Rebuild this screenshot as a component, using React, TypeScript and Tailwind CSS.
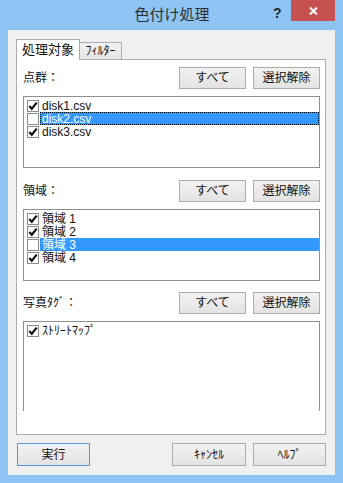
import type { ReactNode } from "react";

type Item = { label: string; checked: boolean; selected?: boolean; focus?: boolean };

const points: Item[] = [
  { label: "disk1.csv", checked: true },
  { label: "disk2.csv", checked: false, selected: true, focus: true },
  { label: "disk3.csv", checked: true },
];

const regions: Item[] = [
  { label: "領域 1", checked: true },
  { label: "領域 2", checked: true },
  { label: "領域 3", checked: false, selected: true },
  { label: "領域 4", checked: true },
];

const tags: Item[] = [{ label: "ｽﾄﾘｰﾄﾏｯﾌﾟ", checked: true }];

function Btn({ children, width, primary }: { children: ReactNode; width: string; primary?: boolean }) {
  return (
    <button
      className={
        "h-[22px] flex items-center justify-center text-[12px] text-[#111] bg-gradient-to-b from-[#f2f2f2] to-[#e3e3e3] border " +
        (primary ? "border-[#4d9ae4] " : "border-[#acacac] ") +
        width
      }
    >
      {children}
    </button>
  );
}

function Check({ on }: { on: boolean }) {
  return (
    <span className="w-[12px] h-[12px] border border-[#8a8a8a] bg-white flex items-center justify-center shrink-0">
      {on && (
        <svg width="10" height="10" viewBox="0 0 10 10">
          <path d="M1.3 5 L3.8 7.7 L8.7 1.6" stroke="#111" strokeWidth="2.2" fill="none" />
        </svg>
      )}
    </span>
  );
}

function CheckList({ items, height, noBottom }: { items: Item[]; height: string; noBottom?: boolean }) {
  return (
    <div
      className={
        "w-[297px] bg-white border border-[#8f8f8f] pt-[2px] flex flex-col " +
        (noBottom ? "border-b-0 " : "") +
        height
      }
    >
      {items.map((it) => (
        <div key={it.label} className="h-[13px] flex items-center pl-[3px]">
          <Check on={it.checked} />
          <span
            className={
              "ml-[1px] flex-1 h-[13px] flex items-center pl-[2px] text-[12px] leading-none " +
              (it.selected ? "bg-[#3399ff] text-white " : "text-[#111] ") +
              (it.focus ? "outline-1 outline-dotted outline-black -outline-offset-1" : "")
            }
          >
            {it.label}
          </span>
        </div>
      ))}
    </div>
  );
}

function Section({ label, items, mt, noBottom, listH }: { label: string; items: Item[]; mt: string; noBottom?: boolean; listH: string }) {
  return (
    <div className={"flex flex-col " + mt}>
      <div className="w-[297px] h-[22px] flex items-center">
        <span className="flex-1 text-[12px] text-[#111]">{label}</span>
        <Btn width="w-[67px]">すべて</Btn>
        <div className="w-[7px]" />
        <Btn width="w-[67px]">選択解除</Btn>
      </div>
      <div className="mt-[7px]">
        <CheckList items={items} height={listH} noBottom={noBottom} />
      </div>
    </div>
  );
}

export default function App() {
  return (
    <div className="w-[343px] h-[483px] bg-[#8dc4f4] flex flex-col font-['Liberation_Sans','Noto_Sans_CJK_JP',sans-serif] select-none">
      {/* タイトルバー */}
      <div className="relative h-[30px] shrink-0 flex items-center justify-center">
        <span className="text-[15px] text-[#2e2e2e] pt-[1px] pl-[1px]">色付け処理</span>
        <span className="absolute left-[273px] top-[3px] text-[14px] font-bold text-[#1f2a36]">?</span>
        <div className="absolute left-[291px] top-0 w-[44px] h-[21px] bg-[#c75050] flex items-center justify-center">
          <svg width="9" height="8" viewBox="0 0 9 8">
            <path d="M1 0.5 L8 7.5 M8 0.5 L1 7.5" stroke="white" strokeWidth="2" />
          </svg>
        </div>
      </div>

      {/* 本体 */}
      <div className="mx-[8px] h-[445px] bg-[#f0f0f0] flex flex-col pl-[8px]">
        {/* タブ */}
        <div className="relative z-10 mt-[9px] -mb-px h-[21px] flex items-end">
          <div className="w-[64px] h-[21px] bg-white border border-b-0 border-[#acacac] flex items-center justify-center text-[13px] text-[#111]">
            処理対象
          </div>
          <div className="w-[42px] h-[18px] bg-gradient-to-b from-[#f2f2f2] to-[#e5e5e5] border border-l-0 border-[#acacac] flex items-center justify-center text-[12px] text-[#111]">
            ﾌｨﾙﾀｰ
          </div>
        </div>
        <div className="w-[310px] h-[376px] bg-white border border-[#acacac] pl-[6px] pt-[7px] overflow-hidden">
          <Section label="点群：" items={points} mt="mt-0" listH="h-[72px]" />
          <Section label="領域：" items={regions} mt="mt-[12px]" listH="h-[72px]" />
          <Section label="写真ﾀｸﾞ：" items={tags} mt="mt-[11px]" listH="h-[90px]" noBottom />
        </div>

        {/* 下部ボタン */}
        <div className="mt-[8px] flex items-center pl-[1px]">
          <Btn width="w-[73px] h-[23px]" primary>
            実行
          </Btn>
          <div className="w-[82px]" />
          <Btn width="w-[74px] h-[23px]">ｷｬﾝｾﾙ</Btn>
          <div className="w-[7px]" />
          <Btn width="w-[73px] h-[23px]">ﾍﾙﾌﾟ</Btn>
        </div>
      </div>
    </div>
  );
}
